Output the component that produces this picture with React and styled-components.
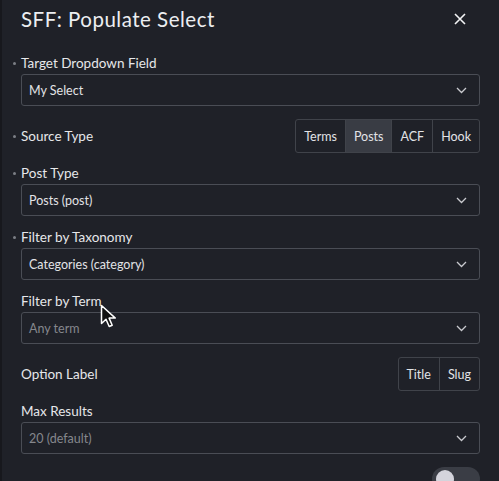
import React from 'react';
import styled, { createGlobalStyle } from 'styled-components';

const Global = createGlobalStyle`
  html, body { margin: 0; padding: 0; background: #1f2128; }
  body { font-family: Lato, "Open Sans", sans-serif; overflow: hidden; }
`;

const Panel = styled.div`
  position: relative;
  width: 499px;
  height: 481px;
  box-sizing: border-box;
  background: #1f2128;
  border-left: 2px solid #17181d;
  padding: 0 19px 0 19px;
  color: #e4e5e8;
  overflow: hidden;
`;

const Header = styled.div`
  display: flex;
  align-items: center;
  justify-content: space-between;
  height: 38px;
  margin-bottom: 18px;
`;

const Title = styled.h1`
  margin: 0;
  font-size: 20.5px;
  font-weight: 400;
  color: #eceef1;
  letter-spacing: 0.5px;
`;

const Close = styled.button`
  background: none;
  border: 0;
  padding: 0;
  margin-right: 13px;
  width: 14px;
  height: 14px;
  display: flex;
  cursor: pointer;
`;

const Fields = styled.div`
  display: flex;
  flex-direction: column;
  gap: 14px;
`;

const Field = styled.div`
  display: flex;
  flex-direction: column;
`;

const Row = styled.div`
  display: flex;
  align-items: center;
  justify-content: space-between;
  height: 32px;
`;

const Label = styled.label`
  position: relative;
  font-size: 13.5px;
  line-height: 15px;
  color: #e6e7ea;
  margin-bottom: ${({ inline }) => (inline ? '0' : '3px')};

  &::before {
    content: '';
    display: ${({ dot }) => (dot ? 'block' : 'none')};
    position: absolute;
    left: -8px;
    top: 6px;
    width: 3px;
    height: 3px;
    border-radius: 50%;
    background: #7c7f86;
  }
`;

const Select = styled.div`
  display: flex;
  align-items: center;
  justify-content: space-between;
  height: 32px;
  box-sizing: border-box;
  border: 1px solid #4a4d55;
  border-radius: 3px;
  padding: 0 12px 0 7px;
  font-size: 12.5px;
  color: ${({ muted }) => (muted ? '#85878d' : '#e2e3e6')};
`;

const Segmented = styled.div`
  display: flex;
  height: 32px;
  border: 1px solid #40434a;
  border-radius: 3px;
  overflow: hidden;
`;

const Seg = styled.div`
  display: flex;
  align-items: center;
  justify-content: center;
  padding: 0 8px;
  font-size: 12.5px;
  color: #e2e3e6;
  background: ${({ active }) => (active ? '#393c44' : 'transparent')};
  & + & { border-left: 1px solid #40434a; }
`;

const ToggleRow = styled.div`
  display: flex;
  justify-content: flex-end;
  margin-top: 13px;
`;

const Toggle = styled.div`
  position: relative;
  width: 48px;
  height: 24px;
  border-radius: 12px;
  background: #3a3d45;

  &::after {
    content: '';
    position: absolute;
    left: 4px;
    top: 3px;
    width: 18px;
    height: 18px;
    border-radius: 50%;
    background: #d4d4dc;
  }
`;

const Cursor = styled.svg`
  position: absolute;
  left: 98px;
  top: 304px;
`;

const Chevron = () => (
  <svg width="11" height="7" viewBox="0 0 11 7">
    <path d="M1 1l4.5 4.5L10 1" fill="none" stroke="#c9cacf" strokeWidth="1.3" />
  </svg>
);

const DropField = ({ label, value, dot, muted }) => (
  <Field>
    <Label dot={dot}>{label}</Label>
    <Select muted={muted}>
      <span>{value}</span>
      <Chevron />
    </Select>
  </Field>
);

export default function App() {
  return (
    <>
      <Global />
      <Panel>
        <Header>
          <Title>SFF: Populate Select</Title>
          <Close aria-label="Close">
            <svg width="14" height="14" viewBox="0 0 14 14">
              <path d="M2 2l10 10M12 2L2 12" stroke="#f2f3f5" strokeWidth="1.6" />
            </svg>
          </Close>
        </Header>
        <Fields>
          <DropField dot label="Target Dropdown Field" value="My Select" />
          <Row>
            <Label dot inline>Source Type</Label>
            <Segmented>
              <Seg>Terms</Seg>
              <Seg active>Posts</Seg>
              <Seg>ACF</Seg>
              <Seg>Hook</Seg>
            </Segmented>
          </Row>
          <DropField dot label="Post Type" value="Posts (post)" />
          <DropField dot label="Filter by Taxonomy" value="Categories (category)" />
          <DropField label="Filter by Term" value="Any term" muted />
          <Row>
            <Label inline>Option Label</Label>
            <Segmented>
              <Seg>Title</Seg>
              <Seg>Slug</Seg>
            </Segmented>
          </Row>
          <DropField label="Max Results" value="20 (default)" muted />
        </Fields>
        <ToggleRow>
          <Toggle />
        </ToggleRow>
        <Cursor width="20" height="26" viewBox="0 0 20 26">
          <path d="M1.5 1.5v18l4.5-4.3 3.2 7.3 3-1.3-3.1-7.1h6.2z" fill="#111" stroke="#fff" strokeWidth="1.5" strokeLinejoin="round" />
        </Cursor>
      </Panel>
    </>
  );
}
